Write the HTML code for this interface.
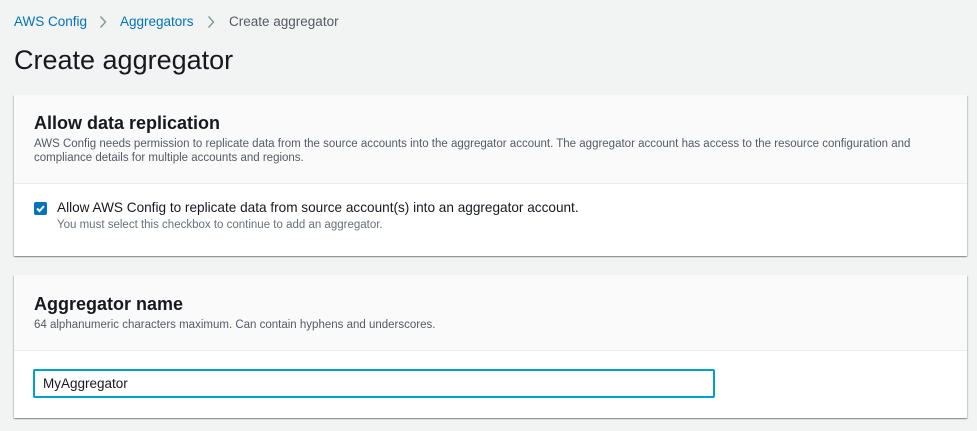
<!DOCTYPE html>
<html><head><meta charset="utf-8"><style>
body{margin:0;width:977px;height:431px;background:#f2f3f3;font-family:"Liberation Sans",sans-serif;color:#16191f;overflow:hidden;position:relative}
.a{position:absolute;white-space:nowrap}
.panel{position:absolute;left:14px;width:953px;background:#fff;box-shadow:0 1px 1px 0 rgba(0,28,36,.3),1px 1px 1px 0 rgba(0,28,36,.15),-1px 1px 1px 0 rgba(0,28,36,.15)}
.hd{position:absolute;left:0;top:0;width:100%;background:#fafafa;border-bottom:1px solid #eaeded}
</style></head><body>
<div class="a" style="left:14px;top:14px;font-size:13.5px;color:#0073bb">AWS Config</div>
<svg class="a" style="left:99px;top:15px" width="8" height="14" viewBox="0 0 8 14"><path d="M1.5 1.5l5 5.5-5 5.5" stroke="#879596" stroke-width="1.4" fill="none"/></svg>
<div class="a" style="left:120px;top:14px;font-size:13.5px;color:#0073bb">Aggregators</div>
<svg class="a" style="left:207px;top:15px" width="8" height="14" viewBox="0 0 8 14"><path d="M1.5 1.5l5 5.5-5 5.5" stroke="#879596" stroke-width="1.4" fill="none"/></svg>
<div class="a" style="left:229px;top:14px;font-size:13.5px;color:#545b64">Create aggregator</div>
<div class="a" style="left:14px;top:45px;font-size:27px">Create aggregator</div>

<div class="panel" style="top:95px;height:161px">
 <div class="hd" style="height:88px"></div>
 <div class="a" style="left:20px;top:18px;font-size:18px;font-weight:bold">Allow data replication</div>
 <div class="a" style="left:20px;top:42px;font-size:11.5px;line-height:14px;color:#545b64">AWS Config needs permission to replicate data from the source accounts into the aggregator account. The aggregator account has access to the resource configuration and<br>compliance details for multiple accounts and regions.</div>
 <div class="a" style="left:20px;top:107px;width:13px;height:13px;background:#0073bb;border-radius:2px"><svg width="13" height="13" viewBox="0 0 13 13"><path d="M3 6.5l2.5 2.5 4.5-5" stroke="#fff" stroke-width="2" fill="none"/></svg></div>
 <div class="a" style="left:43px;top:105px;font-size:13.6px">Allow AWS Config to replicate data from source account(s) into an aggregator account.</div>
 <div class="a" style="left:43px;top:124px;font-size:11.5px;color:#687078">You must select this checkbox to continue to add an aggregator.</div>
</div>

<div class="panel" style="top:275px;height:143px">
 <div class="hd" style="height:75px"></div>
 <div class="a" style="left:20px;top:19px;font-size:18px;font-weight:bold">Aggregator name</div>
 <div class="a" style="left:20px;top:44px;font-size:11.5px;color:#545b64">64 alphanumeric characters maximum. Can contain hyphens and underscores.</div>
 <div class="a" style="left:19px;top:94px;width:678px;height:25px;border:2px solid #00a1c9;border-radius:2px;background:#fff"></div>
 <div class="a" style="left:29px;top:101px;font-size:13.5px">MyAggregator</div>
</div>
</body></html>
